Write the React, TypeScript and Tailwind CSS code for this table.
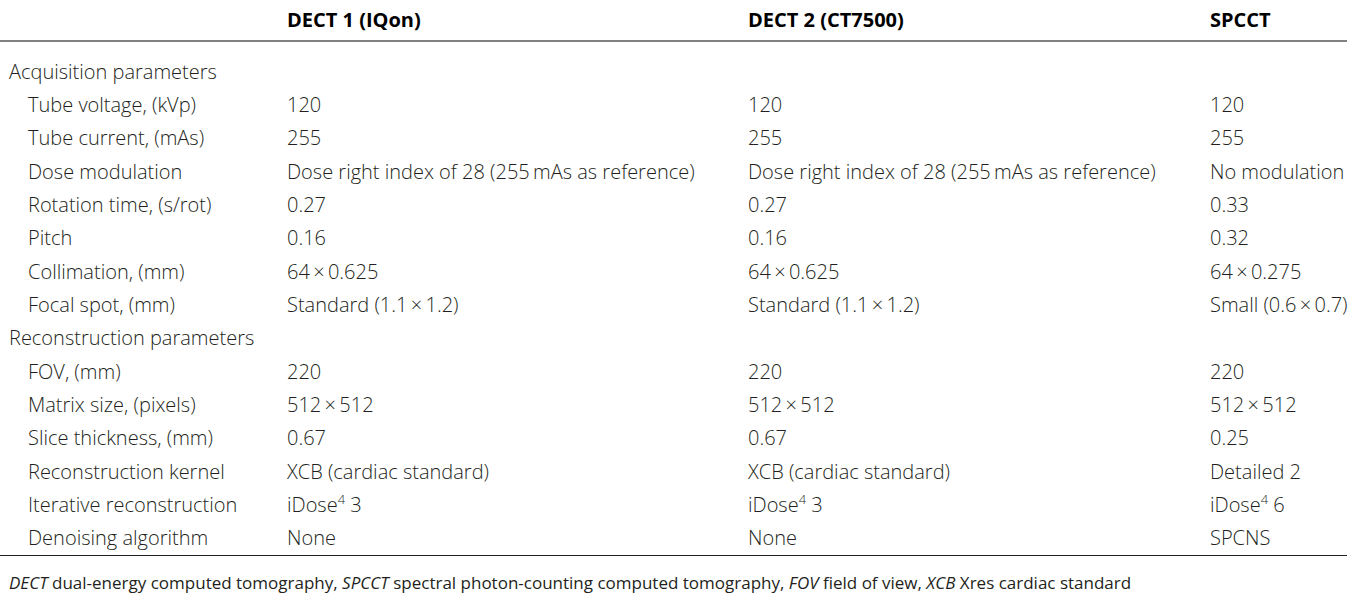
import React from "react";

type Row = { label: string; indent: boolean; a?: React.ReactNode; b?: React.ReactNode; c?: React.ReactNode };

const X = "\u00d7";
const iDose = (n: string) => (
  <>
    iDose<sup className="text-[13px] relative -top-[8px] align-baseline">4</sup> {n}
  </>
);

const rows: Row[] = [
  { label: "Acquisition parameters", indent: false },
  { label: "Tube voltage, (kVp)", indent: true, a: "120", b: "120", c: "120" },
  { label: "Tube current, (mAs)", indent: true, a: "255", b: "255", c: "255" },
  {
    label: "Dose modulation",
    indent: true,
    a: "Dose right index of 28 (255\u2009mAs as reference)",
    b: "Dose right index of 28 (255\u2009mAs as reference)",
    c: "No modulation",
  },
  { label: "Rotation time, (s/rot)", indent: true, a: "0.27", b: "0.27", c: "0.33" },
  { label: "Pitch", indent: true, a: "0.16", b: "0.16", c: "0.32" },
  { label: "Collimation, (mm)", indent: true, a: `64\u2009${X}\u20090.625`, b: `64\u2009${X}\u20090.625`, c: `64\u2009${X}\u20090.275` },
  {
    label: "Focal spot, (mm)",
    indent: true,
    a: `Standard (1.1\u2009${X}\u20091.2)`,
    b: `Standard (1.1\u2009${X}\u20091.2)`,
    c: `Small (0.6\u2009${X}\u20090.7)`,
  },
  { label: "Reconstruction parameters", indent: false },
  { label: "FOV, (mm)", indent: true, a: "220", b: "220", c: "220" },
  { label: "Matrix size, (pixels)", indent: true, a: `512\u2009${X}\u2009512`, b: `512\u2009${X}\u2009512`, c: `512\u2009${X}\u2009512` },
  { label: "Slice thickness, (mm)", indent: true, a: "0.67", b: "0.67", c: "0.25" },
  { label: "Reconstruction kernel", indent: true, a: "XCB (cardiac standard)", b: "XCB (cardiac standard)", c: "Detailed 2" },
  { label: "Iterative reconstruction", indent: true, a: iDose("3"), b: iDose("3"), c: iDose("6") },
  { label: "Denoising algorithm", indent: true, a: "None", b: "None", c: "SPCNS" },
];

export default function App() {
  return (
    <div
      className="w-[1356px] h-[601px] bg-white text-[#231f20]"
      style={{ fontFamily: '"Open Sans", "Liberation Sans", sans-serif' }}
    >
      <div className="w-[1347px]">
        <div className="grid grid-cols-[287px_461px_462px_137px] h-[42px] items-center border-b-2 border-[#808080] text-[20px] font-bold text-black">
          <div />
          <div>DECT 1 (IQon)</div>
          <div>DECT 2 (CT7500)</div>
          <div>SPCCT</div>
        </div>
        <div className="pt-[13px] border-b border-[#231f20] font-light text-[20px]">
          {rows.map((r, i) => (
            <div key={i} className="grid grid-cols-[287px_461px_462px_137px] h-[33.33px] items-center whitespace-nowrap">
              <div className={r.indent ? "pl-[28px]" : "pl-[9px]"}>{r.label}</div>
              <div>{r.a}</div>
              <div>{r.b}</div>
              <div>{r.c}</div>
            </div>
          ))}
        </div>
        <div className="pl-[9px] pt-[14px] text-[17px] whitespace-nowrap">
          <i>DECT</i> dual-energy computed tomography, <i>SPCCT</i> spectral photon-counting computed tomography,{" "}
          <i>FOV</i> field of view, <i>XCB</i> Xres cardiac standard
        </div>
      </div>
    </div>
  );
}
